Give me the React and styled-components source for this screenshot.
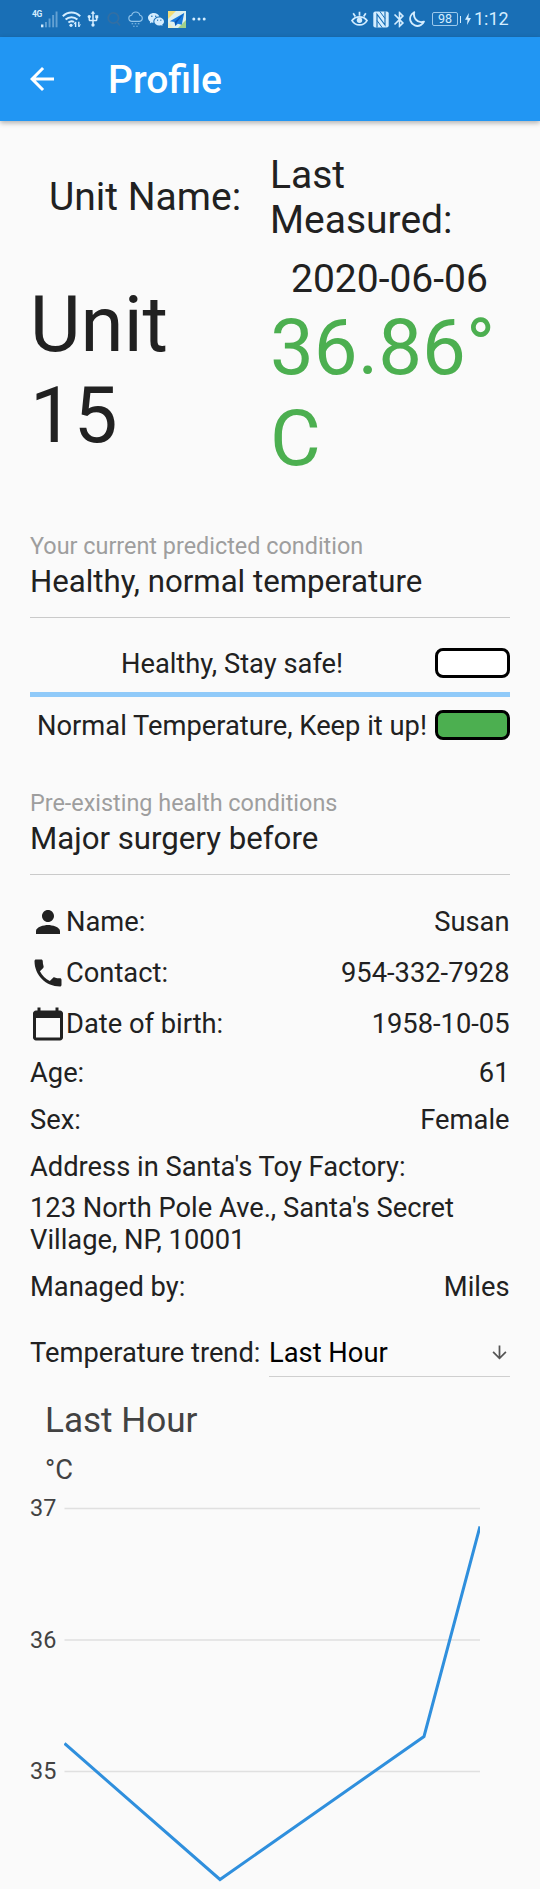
import React from "react";
import styled, { createGlobalStyle } from "styled-components";
import { MdArrowBack, MdPerson, MdPhone, MdCalendarToday, MdArrowDownward, MdUsb, MdBluetooth } from "react-icons/md";
import { BsWechat } from "react-icons/bs";

const Global = createGlobalStyle`
  * { box-sizing: border-box; }
  body { margin: 0; background: #fafafa; font-family: Roboto, "Liberation Sans", sans-serif; color: #212121; }
`;

const Screen = styled.div`
  width: 540px;
  height: 1889px;
  overflow: hidden;
  background: #fafafa;
`;

const StatusBar = styled.div`
  height: 37px;
  background: #196fb6;
  color: #d4edff;
  display: flex;
  align-items: center;
  justify-content: space-between;
  padding: 1px 32px 0;
`;

const StatusGroup = styled.div`
  display: flex;
  align-items: center;
  height: 24px;
`;

const StatusIcon = styled.span`
  display: flex;
  align-items: center;
  justify-content: center;
  flex: none;
  width: ${(p) => p.$width}px;
  margin-left: ${(p) => p.$gap || 0}px;
  svg { display: block; flex: none; }
`;

const Network = styled.span`
  width: 9px;
  font-size: 8.5px;
  font-weight: 700;
  line-height: 9px;
  letter-spacing: -0.5px;
  align-self: flex-start;
  margin-top: 3px;
  white-space: nowrap;
`;

const Battery = styled.span`
  display: flex;
  align-items: center;
  justify-content: center;
  width: 26px;
  height: 14px;
  margin-left: 7px;
  border: 1px solid #9cc9ec;
  border-radius: 2px;
  font-size: 12.5px;
  line-height: 12px;
`;

const BatteryCap = styled.span`
  width: 1.5px;
  height: 7px;
  margin-left: 1.5px;
  background: #d4edff;
`;

const Clock = styled.span`
  font-size: 18px;
  line-height: 24px;
  width: 37px;
  padding-left: 3px;
  white-space: nowrap;
`;

const AppBar = styled.header`
  height: 84px;
  background: #2196f3;
  color: #fff;
  display: flex;
  align-items: center;
  padding-left: 24px;
  position: relative;
  box-shadow: 0 2px 5px rgba(0, 0, 0, 0.3);
  svg { display: block; }
`;

const Title = styled.h1`
  margin: 0 0 0 48px;
  padding-top: 2px;
  font-size: 39px;
  line-height: 46px;
  font-weight: 500;
`;

const Body = styled.main`
  padding: 0 30px;
`;

const Summary = styled.section`
  display: grid;
  grid-template-columns: 240px 240px;
  padding-top: 32px;
  height: 410px;
`;

const SummaryColumn = styled.div`
  display: flex;
  flex-direction: column;
`;

const Caption = styled.div`
  font-size: 39px;
  line-height: 45px;
  padding-left: ${(p) => p.$indent || 0}px;
  height: ${(p) => p.$height}px;
  padding-top: ${(p) => p.$top || 0}px;
  white-space: pre-line;
`;

const Figure = styled.div`
  font-size: 78px;
  line-height: 91.4px;
  color: ${(p) => p.$color || "inherit"};
  white-space: pre-line;
`;

const Field = styled.section`
  height: 87px;
  border-bottom: 1px solid #cacaca;
`;

const FieldLabel = styled.div`
  font-size: 23.4px;
  line-height: 30px;
  color: #9e9e9e;
`;

const FieldValue = styled.div`
  font-size: 31.2px;
  line-height: 38px;
  margin-top: 2px;
`;

const Conditions = styled.section`
  padding-top: 30px;
  height: 169.5px;
`;

const Condition = styled.div`
  display: flex;
  align-items: center;
  height: 30px;
`;

const ConditionText = styled.span`
  flex: 1;
  padding-top: 1px;
  padding-right: 1px;
  text-align: center;
  font-size: 27.3px;
  line-height: 30px;
  white-space: nowrap;
`;

const Lamp = styled.div`
  width: 75px;
  height: 30px;
  border: 3px solid #000;
  border-radius: 8px;
  background: ${(p) => p.$fill};
`;

const Rule = styled.div`
  height: 4.5px;
  margin: 14px 0 13.5px;
  background: #90caf9;
`;

const Details = styled.section`
  padding-top: 21.5px;
`;

const DetailRow = styled.div`
  display: flex;
  align-items: center;
  height: ${(p) => p.$height || 47}px;
  font-size: 27.3px;
  line-height: 32px;
  svg { display: block; }
`;

const DetailValue = styled.span`
  margin-left: auto;
  padding-right: 0.5px;
`;

const Address = styled.div`
  font-size: 27.3px;
  line-height: 32px;
  height: 73px;
  padding-top: 2px;
`;

const TrendRow = styled.div`
  display: flex;
  font-size: 27.3px;
  line-height: 32px;
  height: 40px;
  margin-top: 27px;
  white-space: nowrap;
`;

const Select = styled.div`
  display: flex;
  align-items: flex-start;
  justify-content: space-between;
  width: 241px;
  margin-left: auto;
  color: #000;
  border-bottom: 1px solid #cfcfcf;
  svg { display: block; margin: 5px 0 0; color: #555; }
`;

const ChartTitle = styled.h2`
  margin: 20px 0 0 15px;
  font-size: 35.1px;
  line-height: 47px;
  font-weight: 400;
  color: #424242;
`;

const ChartUnit = styled.div`
  margin-left: 15px;
  font-size: 27.3px;
  line-height: 53px;
  color: #424242;
`;

const Chart = styled.div`
  display: flex;
  height: 392px;
  svg { display: block; }
`;

const Axis = styled.div`
  width: 34px;
  font-size: 23.4px;
  line-height: 23px;
  color: #424242;
`;

const Tick = styled.div`
  height: 131.7px;
`;

const DETAILS = [
  { label: "Name:", value: "Susan", Icon: MdPerson },
  { label: "Contact:", value: "954-332-7928", Icon: MdPhone },
  { label: "Date of birth:", value: "1958-10-05", Icon: MdCalendarToday },
  { label: "Age:", value: "61" },
  { label: "Sex:", value: "Female" },
  { label: "Address in Santa's Toy Factory:" },
];

const SignalIcon = () => (
  <svg width="17" height="17" viewBox="0 0 17 17" fill="currentColor">
    <rect x="0" y="13.5" width="2.4" height="2.8" />
    <g opacity="0.4">
      <rect x="4" y="11" width="1.9" height="5.3" />
      <rect x="7.6" y="7.5" width="1.9" height="8.8" />
      <rect x="11.2" y="4" width="1.9" height="12.3" />
      <rect x="14.6" y="0.5" width="1.9" height="15.8" />
    </g>
  </svg>
);

const WifiIcon = () => (
  <svg width="19" height="17" viewBox="0 0 19 17" fill="none" stroke="currentColor" strokeWidth="2">
    <path d="M0.8 5.2C5.8 0.3 13.2 0.3 18.2 5.2" />
    <path d="M3.6 8.6C7 5.4 12 5.4 15.4 8.6" />
    <path d="M6.4 11.6C8.2 10 10.4 9.9 12 11" />
    <circle cx="9" cy="14.3" r="1.6" fill="currentColor" stroke="none" />
    <path d="M13.6 11v5M16.8 10.8v5" strokeWidth="1.4" />
    <path d="M12 13.4l1.6-2.6M18.4 13.4l-1.6 2.6" strokeWidth="1" />
  </svg>
);

const SearchIcon = () => (
  <svg width="14" height="16" viewBox="0 0 14 16" fill="none" stroke="#3d6f9d" strokeWidth="1.8" opacity="0.7">
    <circle cx="6.4" cy="7" r="5.2" />
    <path d="M10 11l3 3.5" />
  </svg>
);

const DrizzleIcon = () => (
  <svg width="15" height="16" viewBox="0 0 15 16" fill="none" stroke="#8fc3ea" strokeWidth="1.1">
    <path d="M3.4 10.4C1.6 10 0.8 8.8 0.8 7.3C0.8 5.6 2 4.4 3.6 4.3C4.2 2.2 5.8 1 7.7 1C9.8 1 11.4 2.3 11.9 4.3C13.4 4.6 14.3 5.7 14.3 7.2C14.3 8.8 13.3 10.1 11.6 10.4H3.4" />
    <path d="M3.6 12.8h1.6M6.7 12.8h1.6M9.8 12.8h1.6M5.2 15.2h1.4M8.300 15.2h1.4" />
  </svg>
);

const MapIcon = () => (
  <svg width="18" height="17" viewBox="0 0 18 17">
    <rect width="18" height="17" fill="#dff0ee" />
    <path d="M0 0h8L0 8z" fill="#f2dc78" />
    <path d="M10 17l8-8v8z" fill="#9fd08c" />
    <path d="M0 11l6 6H0z" fill="#e9edc8" />
    <path d="M16.2 2L1.8 10.2l4.8 0.8 0.8 4 2.4-2.2 4 1z" fill="#1779dc" />
    <path d="M16.2 2L6.6 11l0.8 4 1.4-3.5z" fill="#0d56ae" />
  </svg>
);

const MoreIcon = () => (
  <svg width="14" height="4" viewBox="0 0 14 4" fill="currentColor">
    <circle cx="1.8" cy="2" r="1.5" />
    <circle cx="7" cy="2" r="1.5" />
    <circle cx="12.2" cy="2" r="1.5" />
  </svg>
);

const EyeIcon = () => (
  <svg width="17" height="16" viewBox="0 0 17 16" fill="none" stroke="currentColor" strokeWidth="1.7">
    <path d="M1 9.6C4.5 4.6 12.5 4.6 16 9.6C12.5 15.4 4.5 15.4 1 9.6z" />
    <circle cx="8.5" cy="9.3" r="2.7" fill="currentColor" stroke="none" />
    <path d="M8.5 0.8v4M2.2 2.3l2.1 3.2M14.8 2.3l-2.1 3.2" />
  </svg>
);

const NfcIcon = () => (
  <svg width="16" height="17" viewBox="0 0 16 17">
    <rect x="0.3" y="0.4" width="15.4" height="16.2" rx="2" fill="currentColor" />
    <path d="M4 16.600V3.200L12 14V0.400" fill="none" stroke="#196fb6" strokeWidth="1.2" />
    <path d="M6.800 0.400L12 7.500M4 9.500L9.200 16.600" stroke="#196fb6" strokeWidth="1" />
  </svg>
);

const MoonIcon = () => (
  <svg width="16" height="16" viewBox="0 0 16 16" fill="none" stroke="currentColor" strokeWidth="1.9" strokeLinejoin="round">
    <path d="M5.2 1.2C1.7 3.2 0.4 7 1.6 10.2C3.1 14.4 7.9 16.1 11.6 14.1C13.1 13.3 14.2 12.2 14.9 10.6C11.9 11.6 8.6 10.8 6.7 8.4C5.1 6.4 4.6 3.7 5.2 1.2z" />
  </svg>
);

const BoltIcon = () => (
  <svg width="6" height="12" viewBox="0 0 6 12" fill="currentColor">
    <path d="M3.8 0L0 6.7h2.5L2 12l4-7H3.4z" />
  </svg>
);

export default function App() {
  return (
    <Screen>
      <Global />
      <StatusBar>
        <StatusGroup>
          <Network>4G</Network>
          <StatusIcon $width={17}><SignalIcon /></StatusIcon>
          <StatusIcon $width={19} $gap={4}><WifiIcon /></StatusIcon>
          <StatusIcon $width={12} $gap={6}><MdUsb size={18} /></StatusIcon>
          <StatusIcon $width={14} $gap={8}><SearchIcon /></StatusIcon>
          <StatusIcon $width={15} $gap={7}><DrizzleIcon /></StatusIcon>
          <StatusIcon $width={16} $gap={5}><BsWechat size={16} /></StatusIcon>
          <StatusIcon $width={18} $gap={4}><MapIcon /></StatusIcon>
          <StatusIcon $width={14} $gap={6}><MoreIcon /></StatusIcon>
        </StatusGroup>
        <StatusGroup>
          <StatusIcon $width={17}><EyeIcon /></StatusIcon>
          <StatusIcon $width={16} $gap={5}><NfcIcon /></StatusIcon>
          <StatusIcon $width={10} $gap={5}><MdBluetooth size={19} /></StatusIcon>
          <StatusIcon $width={16} $gap={5}><MoonIcon /></StatusIcon>
          <Battery>98</Battery>
          <BatteryCap />
          <StatusIcon $width={6} $gap={4}><BoltIcon /></StatusIcon>
          <Clock>1:12</Clock>
        </StatusGroup>
      </StatusBar>
      <AppBar>
        <MdArrowBack size={36} />
        <Title>Profile</Title>
      </AppBar>
      <Body>
        <Summary>
          <SummaryColumn>
            <Caption $top={22} $indent={19} $height={126}>Unit Name:</Caption>
            <Figure>{"Unit\n15"}</Figure>
          </SummaryColumn>
          <SummaryColumn>
            <Caption $height={104}>{"Last\nMeasured:"}</Caption>
            <Caption $indent={21} $height={45}>2020-06-06</Caption>
            <Figure $color="#4caf50">{"36.86°\nC"}</Figure>
          </SummaryColumn>
        </Summary>
        <Field>
          <FieldLabel>Your current predicted condition</FieldLabel>
          <FieldValue>Healthy, normal temperature</FieldValue>
        </Field>
        <Conditions>
          <Condition>
            <ConditionText>Healthy, Stay safe!</ConditionText>
            <Lamp $fill="#fff" />
          </Condition>
          <Rule />
          <Condition>
            <ConditionText>Normal Temperature, Keep it up!</ConditionText>
            <Lamp $fill="#4caf50" />
          </Condition>
        </Conditions>
        <Field>
          <FieldLabel>Pre-existing health conditions</FieldLabel>
          <FieldValue>Major surgery before</FieldValue>
        </Field>
        <Details>
          {DETAILS.map(({ label, value, Icon }) => (
            <DetailRow key={label} $height={Icon ? 51 : 47}>
              {Icon && <Icon size={36} />}
              <span>{label}</span>
              {value && <DetailValue>{value}</DetailValue>}
            </DetailRow>
          ))}
          <Address>123 North Pole Ave., Santa's Secret Village, NP, 10001</Address>
          <DetailRow>
            <span>Managed by:</span>
            <DetailValue>Miles</DetailValue>
          </DetailRow>
        </Details>
        <TrendRow>
          <span>Temperature trend:</span>
          <Select>
            <span>Last Hour</span>
            <MdArrowDownward size={21} />
          </Select>
        </TrendRow>
        <ChartTitle>Last Hour</ChartTitle>
        <ChartUnit>°C</ChartUnit>
        <Chart>
          <Axis>
            <Tick>37</Tick>
            <Tick>36</Tick>
            <Tick>35</Tick>
          </Axis>
          <svg width="416" height="392" viewBox="64 1497 416 392">
            <path d="M64.5 1508.5H480M64.5 1640H480M64.5 1771.5H480" stroke="#e0e0e0" strokeWidth="1.5" />
            <path d="M64.5 1743.5L220 1879.5L424 1736.5L480 1526.5" fill="none" stroke="#2f8fdd" strokeWidth="3" />
          </svg>
        </Chart>
      </Body>
    </Screen>
  );
}
